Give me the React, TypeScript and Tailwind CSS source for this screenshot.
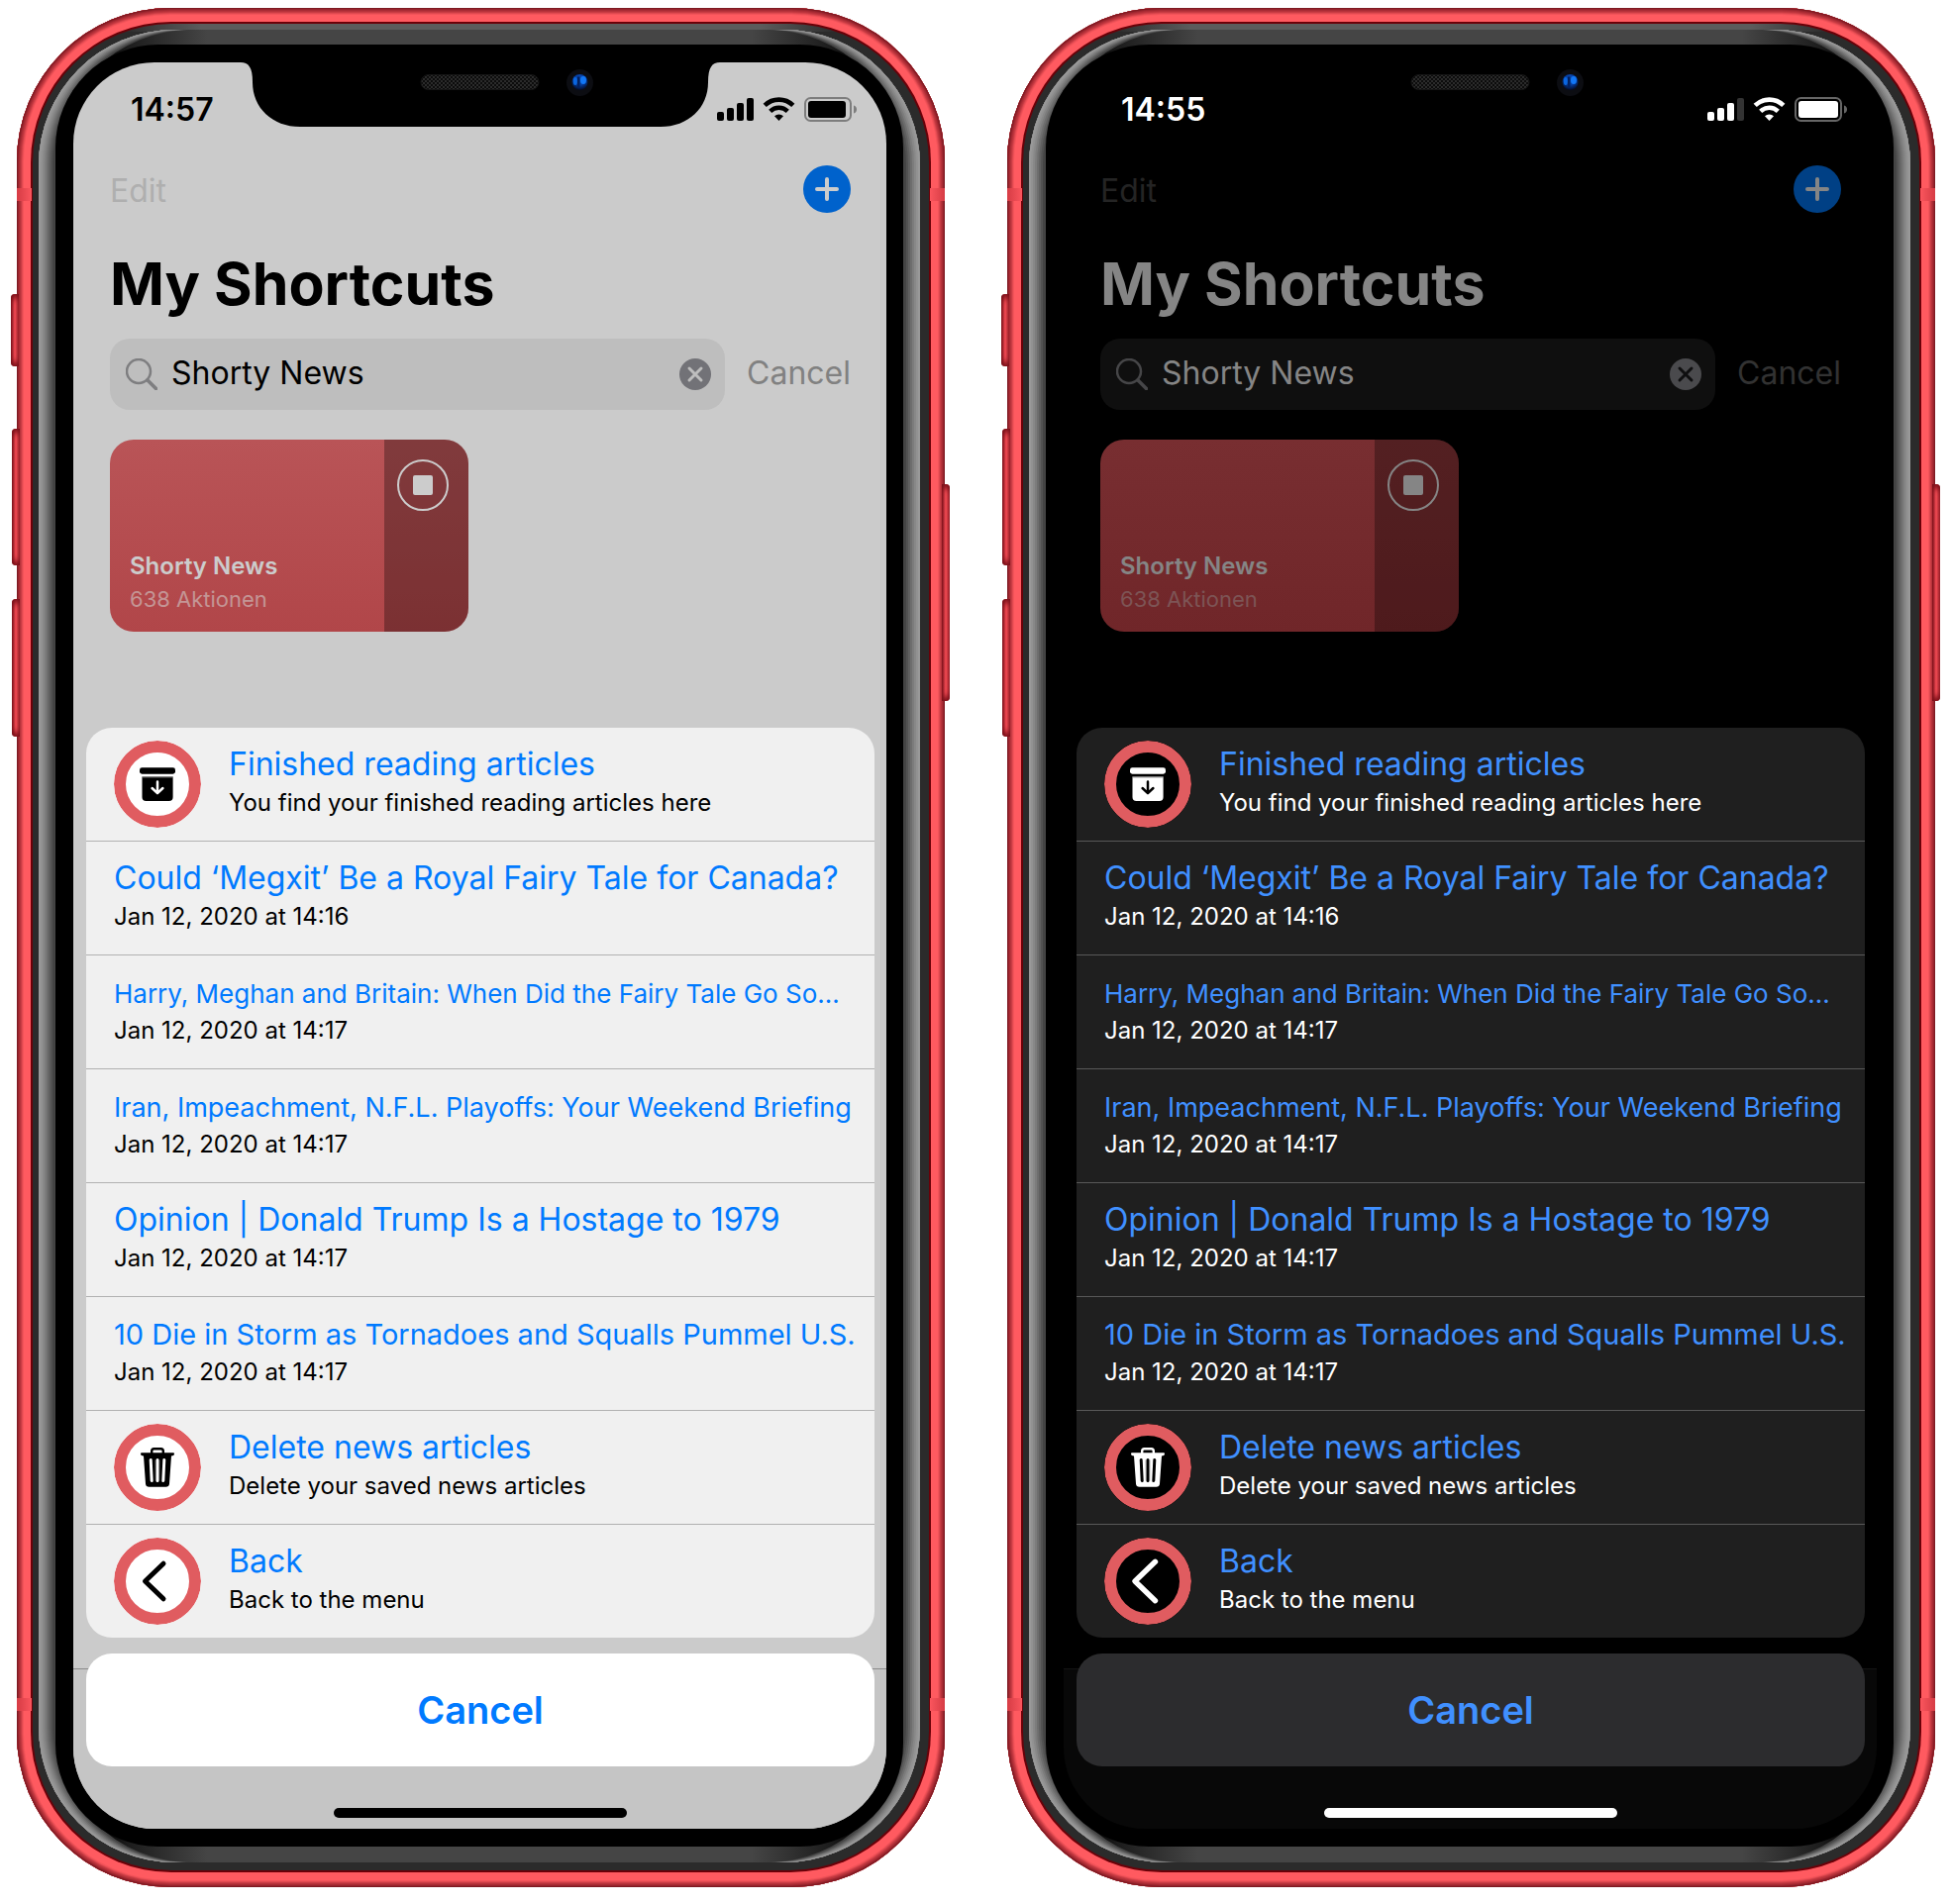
type Theme = {
  dark: boolean;
  time: string;
  screen: string;
  status: string;
  weakBar: string;
  batteryLine: string;
  batteryWidth: number;
  edit: string;
  add: string;
  title: string;
  field: string;
  fieldText: string;
  fieldIcon: string;
  clear: string;
  clearMark: string;
  fieldCancel: string;
  card: string;
  cardSide: string;
  cardTitle: string;
  cardSub: string;
  stopRing: string;
  stopMark: string;
  sheet: string;
  divider: string;
  link: string;
  sub: string;
  badge: string;
  badgeHole: string;
  cancel: string;
  tabBar: string;
  home: string;
};

const light: Theme = {
  dark: false,
  time: "14:57",
  screen: "bg-[#cbcbcb]",
  status: "text-black",
  weakBar: "#000000",
  batteryLine: "#7d7d7d",
  batteryWidth: 38,
  edit: "text-[#afafaf]",
  add: "bg-[#0062cc] text-[#cccccc]",
  title: "text-black",
  field: "bg-[#bebebe]",
  fieldText: "text-black",
  fieldIcon: "text-[#7e7e80]",
  clear: "bg-[#727277]",
  clearMark: "#bebebe",
  fieldCancel: "text-[#818181]",
  card: "from-[#b95457] to-[#b14649]",
  cardSide: "bg-[#000000]/30",
  cardTitle: "text-[#cccccc]",
  cardSub: "text-[#c49595]",
  stopRing: "border-[#cccccc]",
  stopMark: "bg-[#cccccc]",
  sheet: "bg-[#f0f0f0]",
  divider: "border-[#b1b1b1]",
  link: "text-[#007aff]",
  sub: "text-black",
  badge: "bg-white text-black",
  badgeHole: "#ffffff",
  cancel: "bg-white",
  tabBar: "border-[#8c8c8c] bg-[#c5c5c5]",
  home: "bg-black",
};

const dark: Theme = {
  dark: true,
  time: "14:55",
  screen: "bg-black",
  status: "text-white",
  weakBar: "#333333",
  batteryLine: "#666666",
  batteryWidth: 40,
  edit: "text-[#242424]",
  add: "bg-[#004085] text-[#858585]",
  title: "text-[#858585]",
  field: "bg-[#0f0f0f]",
  fieldText: "text-[#858585]",
  fieldIcon: "text-[#464648]",
  clear: "bg-[#4a4a4d]",
  clearMark: "#0f0f10",
  fieldCancel: "text-[#323232]",
  card: "from-[#782e31] to-[#702629]",
  cardSide: "bg-[#000000]/30",
  cardTitle: "text-[#858585]",
  cardSub: "text-[#7d5455]",
  stopRing: "border-[#858585]",
  stopMark: "bg-[#858585]",
  sheet: "bg-[#1f1f1f]",
  divider: "border-[#585858]",
  link: "text-[#4090ff]",
  sub: "text-white",
  badge: "bg-black text-white",
  badgeHole: "#000000",
  cancel: "bg-[#2c2c2e]",
  tabBar: "border-[#141414] bg-[#080808]",
  home: "bg-white",
};

type IconName = "archive" | "trash" | "back";
type Row = { title: string; sub: string; size?: string; icon?: IconName };

const regular = "text-[32px] leading-[44px]";
const rows: Row[] = [
  { icon: "archive", title: "Finished reading articles", sub: "You find your finished reading articles here" },
  { title: "Could ‘Megxit’ Be a Royal Fairy Tale for Canada?", sub: "Jan 12, 2020 at 14:16" },
  { title: "Harry, Meghan and Britain: When Did the Fairy Tale Go So…", sub: "Jan 12, 2020 at 14:17", size: "text-[26px] leading-[40px]" },
  { title: "Iran, Impeachment, N.F.L. Playoffs: Your Weekend Briefing", sub: "Jan 12, 2020 at 14:17", size: "text-[27px] leading-[40px]" },
  { title: "Opinion | Donald Trump Is a Hostage to 1979", sub: "Jan 12, 2020 at 14:17" },
  { title: "10 Die in Storm as Tornadoes and Squalls Pummel U.S.", sub: "Jan 12, 2020 at 14:17", size: "text-[29px] leading-[42px]" },
  { icon: "trash", title: "Delete news articles", sub: "Delete your saved news articles" },
  { icon: "back", title: "Back", sub: "Back to the menu" },
];

function BadgeIcon({ name, t }: { name: IconName; t: Theme }) {
  return (
    <span className={`block size-[88px] shrink-0 overflow-hidden rounded-full ${t.badge}`}>
      <svg viewBox="0 0 88 88" className="size-full" aria-hidden="true">
        <circle cx="44" cy="44" r="38" fill="none" stroke="#e05c60" strokeWidth="12" />
        {name === "archive" && (
          <g>
            <rect x="26" y="27.3" width="36" height="6.4" rx="2.4" fill="currentColor" />
            <path d="M28.5 36.6H59.6V57a4 4 0 0 1-4 4H32.500a4 4 0 0 1-4-4Z" fill="currentColor" />
            <path d="M28.500 36.900H59.600" stroke="#808080" strokeWidth="1" />
            <path d="M44 41.500V52.800M38.600 48L44 53.200L49.400 48" fill="none" stroke={t.badgeHole} strokeWidth="2.500" strokeLinecap="round" strokeLinejoin="round" />
          </g>
        )}
        {name === "trash" && (
          <g>
            <path d="M38.200 30.500V27.500a2.300 2.300 0 0 1 2.300-2.300h7a2.300 2.300 0 0 1 2.300 2.300v3" fill="none" stroke="currentColor" strokeWidth="2.400" />
            <path d="M28 29.300H60a1 1 0 0 1 1 1c0 1.300-1.400 2.300-3 2.300L56 60.500a3.600 3.600 0 0 1-3.600 3.300H35.600A3.600 3.600 0 0 1 32 60.500L30 32.600c-1.600 0-3-1-3-2.300a1 1 0 0 1 1-1Z" fill="currentColor" />
            <path d="M37.200 36.500L38.200 57.500M44 36.500V57.500M50.800 36.500L49.800 57.500" stroke={t.badgeHole} strokeWidth="3" strokeLinecap="round" />
            <path d="M41.700 36.500L42 57.500M46.300 36.500L46 57.500" stroke={t.badgeHole} strokeWidth="0.500" opacity="0.400" />
          </g>
        )}
        {name === "back" && (
          <path
            d={t.dark ? "M51.500 24.300L31 44L51.500 63.700" : "M50 26.200L31.500 44L50 61.800"}
            fill="none"
            stroke="currentColor"
            strokeWidth={t.dark ? 5.400 : 5}
            strokeLinecap="round"
            strokeLinejoin="round"
          />
        )}
      </svg>
    </span>
  );
}

function StatusIcons({ t }: { t: Theme }) {
  return (
    <svg width="142" height="26" viewBox="0 0 142 26" aria-hidden="true">
      <rect x="0" y="15" width="7" height="9" rx="2" fill="currentColor" />
      <rect x="10" y="11" width="7" height="13" rx="2" fill="currentColor" />
      <rect x="20" y="6" width="7" height="18" rx="2" fill="currentColor" />
      <rect x="30" y="1" width="7" height="23" rx="2" fill={t.weakBar} />
      <g fill="none" stroke="currentColor">
        <path d="M48.200 8.400A20.500 20.500 0 0 1 76.800 8.400" strokeWidth="4.600" />
        <path d="M53.700 14.400A12.500 12.500 0 0 1 71.300 14.400" strokeWidth="4.400" />
      </g>
      <path d="M62.500 24L58 19.200a6.600 6.600 0 0 1 9 0Z" fill="currentColor" />
      <rect x="89" y="1" width="46" height="23" rx="5.500" fill="none" stroke={t.batteryLine} strokeWidth="2" />
      <rect x="92" y="4" width={t.batteryWidth} height="17" rx="3" fill="currentColor" />
      <path d="M138 8.500c2 .6 3 2 3 4s-1 3.400-3 4Z" fill={t.batteryLine} />
    </svg>
  );
}

function Notch({ id }: { id: string }) {
  return (
    <svg width="484" height="65" viewBox="0 0 484 65" className="absolute left-1/2 top-0 -translate-x-1/2" aria-hidden="true">
      <defs>
        <pattern id={`${id}-mesh`} width="4" height="4" patternUnits="userSpaceOnUse">
          <rect width="4" height="4" fill="#0c0c0c" />
          <rect width="2" height="2" fill="#2b2b2b" />
          <rect x="2" y="2" width="2" height="2" fill="#2b2b2b" />
        </pattern>
        <radialGradient id={`${id}-lens`} cx="0.5" cy="0.3" r="0.7">
          <stop offset="0" stopColor="#0a52c4" />
          <stop offset="0.55" stopColor="#063a96" />
          <stop offset="1" stopColor="#020a24" />
        </radialGradient>
      </defs>
      <path d="M0 0C8 0 12 5 12 20C12 46 32 65 60 65H424C452 65 472 46 472 20C472 5 476 0 484 0Z" fill="#000" />
      <rect x="182" y="12.500" width="119" height="15" rx="7.500" fill={`url(#${id}-mesh)`} stroke="#151515" />
      <circle cx="342.500" cy="20.500" r="13.500" fill="#0c0d12" />
      <circle cx="342.500" cy="20" r="8" fill={`url(#${id}-lens)`} />
      <ellipse cx="337.800" cy="19" rx="2" ry="4" fill="#0a66e0" />
      <ellipse cx="346" cy="18" rx="3" ry="4" fill="#1277f5" />
      <path d="M340 14.500h2.500v11h-2.500Z" fill="#03205e" />
    </svg>
  );
}

const sideButton =
  "absolute bg-linear-to-r from-[#7a1019] via-[#f64c56] to-[#9a222b] shadow-[inset_0_8px_6px_-4px_#7a1019,inset_0_-8px_6px_-4px_#7a1019]";

function Hardware() {
  return (
    <div aria-hidden="true">
      <div className={`${sideButton} -left-1.5 top-[289px] h-[73px] w-2 rounded-l-sm`} />
      <div className={`${sideButton} -left-[5px] top-[425px] h-[138px] w-2 rounded-l-sm`} />
      <div className={`${sideButton} -left-[5px] top-[597px] h-[139px] w-2 rounded-l-sm`} />
      <div className={`${sideButton} -right-[5px] top-[481px] h-[219px] w-2 rounded-r-sm`} />
      <div className="absolute left-0 top-[182px] h-[13px] w-[15px] bg-linear-to-r from-[#d63c45] to-[#fa555d]" />
      <div className="absolute right-0 top-[182px] h-[13px] w-[15px] bg-linear-to-l from-[#d63c45] to-[#fa555d]" />
      <div className="absolute bottom-[178px] left-0 h-[13px] w-[15px] bg-linear-to-r from-[#d63c45] to-[#fa555d]" />
      <div className="absolute bottom-[178px] right-0 h-[13px] w-[15px] bg-linear-to-l from-[#d63c45] to-[#fa555d]" />
    </div>
  );
}

function Phone({ t, id }: { t: Theme; id: string }) {
  return (
    <section className="relative min-w-0 rounded-[155px] bg-[#ff5a60] px-[14px] pb-[15px] pt-[14px] shadow-[inset_0_0_0_1px_#7e1a22,inset_0_0_0_2px_#97242d,inset_0_0_0_3px_#a92b34,inset_0_0_0_4px_#b8333b,inset_0_0_0_5px_#c93c44,inset_0_0_0_6px_#e04950,inset_0_0_0_7px_#f25359]">
      <Hardware />
      <div className="rounded-[142px] bg-[#6a0008] p-[2px]">
        <div className="rounded-[140px] bg-[#2b2b2b] bg-[linear-gradient(90deg,#181818_60px,#5c5c5c_170px,#5c5c5c_calc(100%-170px),#181818_calc(100%-60px))] bg-[length:100%_8px] bg-no-repeat pb-2 pl-1.5 pr-[9px] pt-1.5">
          <div className="rounded-[137px] bg-[linear-gradient(90deg,#000_60px,#1c1c1c_90px,#454545_170px,#454545_calc(100%-170px),#1c1c1c_calc(100%-90px),#000_calc(100%-60px))] px-[17px] pb-4 pt-[15px] shadow-[inset_2px_0_#999,inset_-2px_0_#999,inset_4px_0_#929292,inset_-4px_0_#929292,inset_6px_0_#888,inset_-6px_0_#888,inset_8px_0_#7c7c7c,inset_-8px_0_#7c7c7c,inset_10px_0_#6e6e6e,inset_-10px_0_#6e6e6e,inset_12px_0_#606060,inset_-12px_0_#606060,inset_14px_0_#525252,inset_-14px_0_#525252,inset_17px_0_#444,inset_-17px_0_#444]">
            <div className="rounded-[104px] bg-black py-[18px] pl-[18px] pr-[17px]">
              <div className={`relative overflow-hidden rounded-[82px] ${t.screen}`}>
                <Notch id={id} />
                <div className={`absolute inset-x-0 bottom-0 h-[162px] border-t ${t.tabBar}`} />
                <div className="relative flex flex-col pb-[11px]">
                  <div className={`mt-7 flex h-10 items-center justify-between pl-[58px] pr-[29px] ${t.status}`}>
                    <time className="text-[32px] leading-10 font-semibold">{t.time}</time>
                    <StatusIcons t={t} />
                  </div>

                  <div className="flex flex-col pl-[37px] pr-9">
                    <div className="mt-9 flex h-12 items-center justify-between">
                      <button type="button" className={`pt-[3px] text-[32px] leading-[50px] ${t.edit}`}>Edit</button>
                      <button type="button" aria-label="Create shortcut" className={`size-12 rounded-full ${t.add}`}>
                        <svg viewBox="0 0 48 48" className="size-12" aria-hidden="true">
                          <path d="M24 14V34M14 24H34" stroke="currentColor" strokeWidth="4" strokeLinecap="round" />
                        </svg>
                      </button>
                    </div>
                    <h1 className={`mt-9 text-[59px] leading-[72px] font-bold ${t.title}`}>My Shortcuts</h1>

                    <div className="mt-[19px] flex items-center gap-[22px]">
                      <div className={`flex h-[72px] min-w-0 flex-1 items-center gap-[14px] rounded-[20px] pl-4 pr-[14px] ${t.field}`}>
                        <svg viewBox="0 0 32 32" className={`size-8 shrink-0 ${t.fieldIcon}`} fill="none" stroke="currentColor" aria-hidden="true">
                          <circle cx="13" cy="13" r="12" strokeWidth="2.500" />
                          <path d="M22 22L30.500 30.500" strokeWidth="3.500" strokeLinecap="round" />
                        </svg>
                        <input
                          type="text"
                          aria-label="Search shortcuts"
                          defaultValue="Shorty News"
                          className={`h-10 min-w-0 flex-1 bg-transparent pb-1 text-[32px] leading-9 outline-none ${t.fieldText}`}
                        />
                        <button type="button" aria-label="Clear search" className={`size-8 shrink-0 rounded-full ${t.clear}`}>
                          <svg viewBox="0 0 32 32" className="size-8" aria-hidden="true">
                            <path d="M10 10L22 22M22 10L10 22" stroke={t.clearMark} strokeWidth="3" strokeLinecap="round" />
                          </svg>
                        </button>
                      </div>
                      <button type="button" className={`pb-0.5 text-[32px] leading-9 ${t.fieldCancel}`}>Cancel</button>
                    </div>

                    <article className={`mt-[30px] flex h-[194px] w-[362px] overflow-hidden rounded-[24px] bg-linear-to-b ${t.card}`}>
                      <div className="flex flex-1 flex-col justify-end pb-[17px] pl-5">
                        <h2 className={`text-[24px] leading-[34px] font-semibold ${t.cardTitle}`}>Shorty News</h2>
                        <p className={`text-[22px] leading-[32px] ${t.cardSub}`}>638 Aktionen</p>
                      </div>
                      <div className={`flex w-[85px] justify-center pr-[7px] pt-5 ${t.cardSide}`}>
                        <button type="button" aria-label="Stop" className={`flex size-[52px] items-center justify-center rounded-full border-2 ${t.stopRing}`}>
                          <span className={`size-5 rounded-xs ${t.stopMark}`} />
                        </button>
                      </div>
                    </article>
                  </div>

                  <ul className={`ml-[13px] mr-3 mt-[97px] overflow-hidden rounded-[26px] ${t.sheet}`}>
                    {rows.map((row, i) => (
                      <li key={i} className={i > 0 ? `border-t ${t.divider}` : ""}>
                        <button type="button" className="flex h-[114px] w-full gap-7 pl-7 pt-[13px] text-left">
                          {row.icon && <BadgeIcon name={row.icon} t={t} />}
                          <span className="flex min-w-0 flex-col pt-0.5">
                            <span className="flex h-11 items-end">
                              <span className={`whitespace-nowrap ${row.size ?? regular} ${t.link}`}>{row.title}</span>
                            </span>
                            <span className={`text-[24px] leading-[34px] ${t.sub}`}>{row.sub}</span>
                          </span>
                        </button>
                      </li>
                    ))}
                  </ul>
                  <button type="button" className={`ml-[13px] mr-3 mt-4 h-[114px] rounded-[26px] text-[38px] font-semibold ${t.cancel} ${t.link}`}>
                    Cancel
                  </button>
                  <div className={`mx-auto mt-[42px] h-2.5 w-[296px] rounded-full ${t.home}`} />
                </div>
              </div>
            </div>
          </div>
        </div>
      </div>
    </section>
  );
}

export default function App() {
  return (
    <main className="grid grid-cols-2 items-start gap-[63px] bg-white pb-[17px] pl-[17px] pr-4 pt-2 font-['Inter',sans-serif]">
      <Phone t={light} id="light" />
      <Phone t={dark} id="dark" />
    </main>
  );
}
